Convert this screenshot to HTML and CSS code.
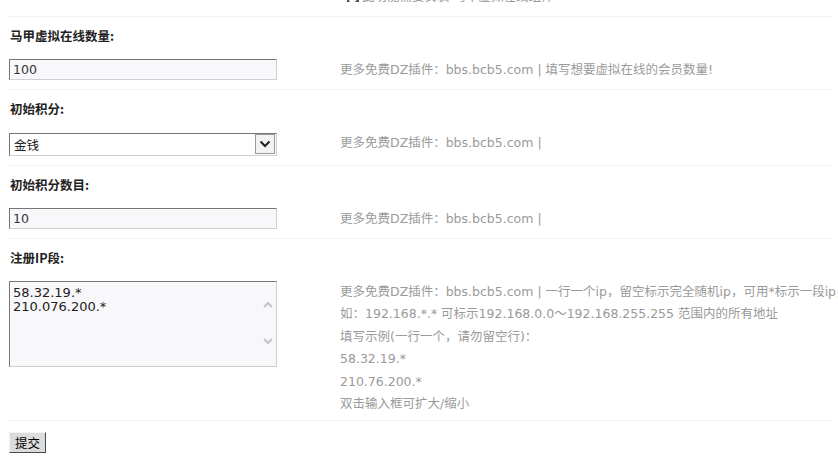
FILE: index.html
```html
<!DOCTYPE html>
<html lang="zh-CN">
<head>
<meta charset="utf-8">
<title>马甲虚拟在线设置</title>
<link rel="stylesheet" href="styles.css">
</head>
<body>
<div class="page">
  <div class="top-note">
    <div></div>
    <div class="note-text"><svg class="note-icon" width="14" height="12" viewBox="0 0 14 12"><path d="M1 6 L4 11 L1 11 Z" fill="#555"/><path d="M9 11 L13 6 L13 11 Z" fill="#555"/></svg>此功能需要安装 马甲虚拟在线组件</div>
  </div>

  <div class="section">
    <div class="label">马甲虚拟在线数量:</div>
    <div class="field-row">
      <div class="field"><input class="txt" type="text" value="100"></div>
      <div class="tips">更多免费DZ插件：bbs.bcb5.com | 填写想要虚拟在线的会员数量!</div>
    </div>
  </div>

  <div class="section">
    <div class="label">初始积分:</div>
    <div class="field-row">
      <div class="field">
        <div class="select-wrap">
          <select class="sel"><option>金钱</option></select>
          <span class="sel-arrow"><svg width="12" height="8" viewBox="0 0 12 8"><path d="M1.5 1.5 L6 6 L10.5 1.5" fill="none" stroke="#222" stroke-width="2"/></svg></span>
        </div>
      </div>
      <div class="tips">更多免费DZ插件：bbs.bcb5.com |</div>
    </div>
  </div>

  <div class="section">
    <div class="label">初始积分数目:</div>
    <div class="field-row">
      <div class="field"><input class="txt" type="text" value="10"></div>
      <div class="tips">更多免费DZ插件：bbs.bcb5.com |</div>
    </div>
  </div>

  <div class="section">
    <div class="label">注册IP段:</div>
    <div class="field-row">
      <div class="field">
        <div class="area-wrap">
          <textarea class="area">58.32.19.*
210.076.200.*</textarea>
          <svg class="chev chev-up" width="10" height="7" viewBox="0 0 10 7"><path d="M1 6 L5 2 L9 6" fill="none" stroke="#c4c4c8" stroke-width="2"/></svg>
          <svg class="chev chev-down" width="10" height="7" viewBox="0 0 10 7"><path d="M1 1 L5 5 L9 1" fill="none" stroke="#c4c4c8" stroke-width="2"/></svg>
        </div>
      </div>
      <div class="tips">更多免费DZ插件：bbs.bcb5.com | 一行一个ip，留空标示完全随机ip，可用*标示一段ip，<br>如：192.168.*.* 可标示192.168.0.0～192.168.255.255 范围内的所有地址<br>填写示例(一行一个，请勿留空行)：<br>58.32.19.*<br>210.76.200.*<br>双击输入框可扩大/缩小</div>
    </div>
  </div>

  <div class="submit-row">
    <button class="btn" type="button">提交</button>
  </div>
</div>
</body>
</html>
```

FILE: styles.css
```css
html, body {
  margin: 0;
  padding: 0;
  overflow: hidden;
  background: #ffffff;
}

body {
  font-family: "DejaVu Sans", "Noto Sans CJK SC", sans-serif;
  font-size: 12.5px;
  color: #333333;
}

.page {
  margin-left: 8px;
  width: 824px;
}

.top-note {
  display: grid;
  grid-template-columns: 338px 1fr;
  margin-top: -11px;
  padding-bottom: 11px;
  border-bottom: 1px solid #f2f2f4;
  line-height: 16px;
  color: #999999;
  white-space: nowrap;
}

.note-text {
  display: flex;
  align-items: center;
}

.note-icon {
  margin-right: 2px;
}

.section {
  border-bottom: 1px solid #f2f2f4;
}

.label {
  padding: 10px 2px 8px;
  line-height: 18px;
  font-family: "Noto Sans CJK SC", "DejaVu Sans", sans-serif;
  font-weight: 700;
  color: #222222;
}

.field-row {
  display: grid;
  grid-template-columns: 332px 1fr;
  align-items: start;
  padding-top: 6px;
}

.field {
  padding: 0 0 9px 1px;
}

.txt {
  box-sizing: border-box;
  display: block;
  width: 268px;
  height: 21px;
  margin: 0;
  padding: 0 3px;
  border: 1px solid;
  border-color: #767676 #cfcfd2 #cfcfd2 #767676;
  background: #f8f8fa;
  font-family: "DejaVu Sans", "Noto Sans CJK SC", sans-serif;
  font-size: 12.5px;
  color: #333333;
  outline: none;
}

.select-wrap {
  position: relative;
  width: 268px;
  margin-top: 1px;
}

.sel {
  -webkit-appearance: none;
  appearance: none;
  box-sizing: border-box;
  display: block;
  width: 268px;
  height: 23px;
  margin: 0;
  padding: 0 4px;
  border: 1px solid;
  border-color: #767676 #cfcfd2 #cfcfd2 #767676;
  border-radius: 0;
  background: #ffffff;
  font-family: "Noto Sans CJK SC", "DejaVu Sans", sans-serif;
  font-size: 12.5px;
  color: #222222;
  outline: none;
}

.sel-arrow {
  position: absolute;
  right: 2px;
  top: 1px;
  box-sizing: border-box;
  width: 20px;
  height: 20px;
  border: 1px solid #9a9a9e;
  background: #f3f3f5;
  display: flex;
  align-items: center;
  justify-content: center;
  pointer-events: none;
}

.area-wrap {
  position: relative;
  width: 268px;
}

.area {
  box-sizing: border-box;
  display: block;
  width: 268px;
  height: 86px;
  margin: 0;
  padding: 4px 3px 2px;
  border: 1px solid;
  border-color: #767676 #cfcfd2 #cfcfd2 #767676;
  background: #f8f8fa;
  font-family: "DejaVu Sans", "Noto Sans CJK SC", sans-serif;
  font-size: 13px;
  line-height: 14px;
  color: #222222;
  resize: none;
  overflow: hidden;
  outline: none;
}

.chev {
  position: absolute;
  right: 4px;
}

.chev-up {
  top: 20px;
}

.chev-down {
  top: 57px;
}

.tips {
  line-height: 22.4px;
  color: #9a9a9a;
  white-space: nowrap;
  padding-bottom: 5px;
}

.submit-row {
  padding: 11px 0 0 1px;
}

.btn {
  box-sizing: border-box;
  width: 37px;
  height: 21px;
  margin: 0;
  padding: 0;
  border: 1px solid;
  border-color: #f4f4f4 #4a4a4a #4a4a4a #f4f4f4;
  background: #dcdcdc;
  font-family: "Noto Sans CJK SC", sans-serif;
  font-size: 12.5px;
  color: #000000;
  line-height: 19px;
}
```
